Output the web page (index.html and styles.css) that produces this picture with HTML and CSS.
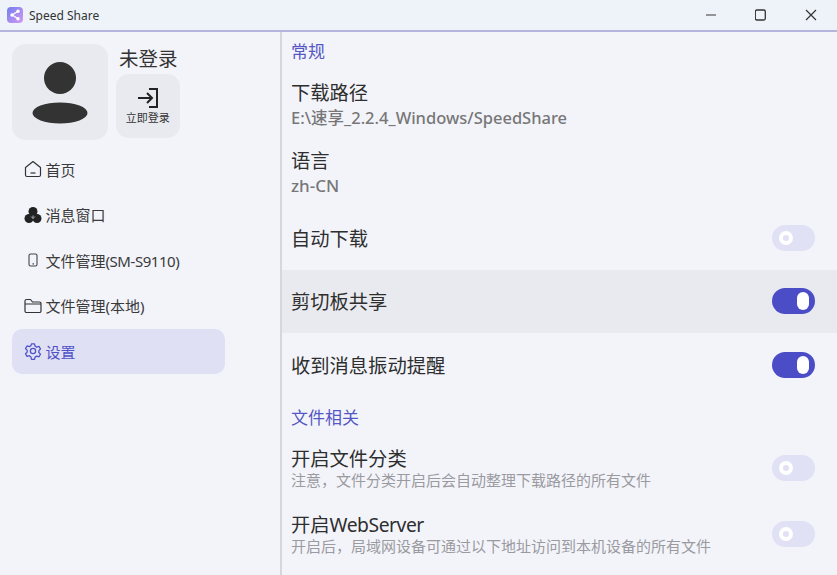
FILE: index.html
```html
<!DOCTYPE html>
<html lang="zh-CN">
<head>
<meta charset="utf-8">
<title>Speed Share</title>
<link rel="stylesheet" href="styles.css">
</head>
<body>
<div class="window">
  <header class="titlebar">
    <div class="app-title">
      <svg class="app-logo" viewBox="0 0 16 16"><defs><linearGradient id="lg" x1="0" y1="0" x2="1" y2="1"><stop offset="0" stop-color="#6f7df0"/><stop offset="1" stop-color="#d79af0"/></linearGradient></defs><rect width="16" height="16" rx="4" fill="url(#lg)"/><path d="M11 4.2 5.2 8l5.8 3.8" fill="none" stroke="#fff" stroke-width="1.3"/><circle cx="11" cy="4.2" r="1.7" fill="#fff"/><circle cx="5" cy="8" r="1.7" fill="#fff"/><circle cx="11" cy="11.8" r="1.7" fill="#fff"/></svg>
      <span>Speed Share</span>
    </div>
    <div class="win-controls">
      <button class="win-btn"><svg viewBox="0 0 12 12" width="12" height="12"><path d="M1 6h10" stroke="#555" stroke-width="1.2"/></svg></button>
      <button class="win-btn"><svg viewBox="0 0 12 12" width="12" height="12"><rect x=".3" y="1" width="10" height="10" rx="1.500" fill="none" stroke="#333" stroke-width="1.300"/></svg></button>
      <button class="win-btn"><svg viewBox="0 0 12 12" width="12" height="12"><path d="M1 1l10 10M11 1 1 11" stroke="#333" stroke-width="1.2"/></svg></button>
    </div>
  </header>
  <div class="main">
    <aside class="sidebar">
      <div class="profile">
        <div class="avatar">
          <svg viewBox="0 0 56 80" width="56" height="80"><circle cx="28" cy="26" r="16" fill="#333"/><ellipse cx="28" cy="61" rx="27.500" ry="10.500" fill="#333"/></svg>
        </div>
        <div class="profile-side">
          <div class="login-state">未登录</div>
          <button class="login-btn">
            <svg viewBox="0 0 24 24" width="24" height="24"><path d="M2 12h14M11 7l5 5-5 5" fill="none" stroke="#222" stroke-width="2"/><path d="M13 3h8v18h-8" fill="none" stroke="#222" stroke-width="2"/></svg>
            <span>立即登录</span>
          </button>
        </div>
      </div>
      <nav class="nav">
        <a class="nav-item">
          <svg viewBox="0 0 18 18" width="18" height="18"><path d="M1.500 7.500 9 1.500l7.500 6v7.500a1.500 1.500 0 0 1-1.500 1.500H3a1.500 1.500 0 0 1-1.500-1.500z" fill="none" stroke="#333" stroke-width="1.200" stroke-linejoin="round"/><path d="M6.500 13h5" stroke="#333" stroke-width="1.200"/></svg>
          <span>首页</span>
        </a>
        <a class="nav-item">
          <svg viewBox="0 0 18 18" width="18" height="18"><circle cx="9" cy="5.500" r="4.500" fill="#222"/><circle cx="5" cy="12.500" r="4.500" fill="#222"/><circle cx="13" cy="12.500" r="4.500" fill="#222"/><path d="M9 9.500v3M9 12.500l-2-2M9 12.500l2-2" stroke="#f3f4fa" stroke-width=".6"/></svg>
          <span>消息窗口</span>
        </a>
        <a class="nav-item">
          <svg viewBox="0 0 18 18" width="18" height="18"><rect x="5" y="3" width="8" height="12" rx="1.500" fill="none" stroke="#444" stroke-width="1.100"/><path d="M8.500 12.800h1.500" stroke="#444" stroke-width="1.200"/></svg>
          <span>文件管理<span class="tight">(SM-S9110)</span></span>
        </a>
        <a class="nav-item">
          <svg viewBox="0 0 18 18" width="18" height="18"><path d="M1 4a1.500 1.500 0 0 1 1.500-1.500h4L8.500 5H15.500A1.500 1.500 0 0 1 17 6.500V14a1.500 1.500 0 0 1-1.500 1.500h-13A1.500 1.500 0 0 1 1 14z" fill="none" stroke="#333" stroke-width="1.200" stroke-linejoin="round"/><path d="M1 7h16" stroke="#333" stroke-width="1"/></svg>
          <span>文件管理(本地)</span>
        </a>
        <a class="nav-item active">
          <svg viewBox="0 0 24 24" width="18" height="18" fill="none" stroke="#4f52c8" stroke-width="1.700" stroke-linejoin="round"><circle cx="12" cy="12" r="3.500"/><path d="M10 2.500h4l.7 3 2.300 1.300 3-.9 2 3.500-2.200 2.100v2.600l2.200 2.100-2 3.500-3-.9-2.300 1.300-.7 3h-4l-.7-3L7 18.200l-3 .9-2-3.500 2.200-2.100v-2.600L2 8.800l2-3.500 3 .9 2.300-1.300z"/></svg>
          <span>设置</span>
        </a>
      </nav>
    </aside>
    <section class="content">
      <h2 class="section-title">常规</h2>
      <div class="row row-info row-path">
        <div class="row-label">下载路径</div>
        <div class="row-value">E:\速享_2.2.4_Windows/SpeedShare</div>
      </div>
      <div class="row row-info row-lang">
        <div class="row-label">语言</div>
        <div class="row-value">zh-CN</div>
      </div>
      <div class="row row-switch">
        <div class="row-label">自动下载</div>
        <span class="switch"><span class="knob"></span></span>
      </div>
      <div class="row row-switch hovered">
        <div class="row-label">剪切板共享</div>
        <span class="switch on"><span class="knob"></span></span>
      </div>
      <div class="row row-switch">
        <div class="row-label">收到消息振动提醒</div>
        <span class="switch on"><span class="knob"></span></span>
      </div>
      <h2 class="section-title second">文件相关</h2>
      <div class="row row-desc">
        <div class="row-text">
          <div class="row-label">开启文件分类</div>
          <div class="row-note">注意，文件分类开启后会自动整理下载路径的所有文件</div>
        </div>
        <span class="switch"><span class="knob"></span></span>
      </div>
      <div class="row row-desc">
        <div class="row-text">
          <div class="row-label">开启<span class="tight">WebServer</span></div>
          <div class="row-note">开启后，局域网设备可通过以下地址访问到本机设备的所有文件</div>
        </div>
        <span class="switch"><span class="knob"></span></span>
      </div>
    </section>
  </div>
</div>
</body>
</html>
```
FILE: styles.css
```css
* { box-sizing: border-box; }
html, body { margin: 0; height: 100%; overflow: hidden; }
body {
  font-family: "Noto Sans", "Noto Sans CJK SC", sans-serif;
  background: #f3f4fa;
  color: #333;
}
.window { width: 837px; height: 575px; display: flex; flex-direction: column; }
.titlebar {
  height: 32px;
  flex: none;
  background: #eef3f9;
  border-bottom: 2px solid #b4b4dc;
  display: flex;
  align-items: center;
  justify-content: space-between;
}
.app-title { display: flex; align-items: center; gap: 6px; padding-left: 7px; font-size: 12px; color: #333; }
.app-logo { width: 16px; height: 16px; }
.win-controls { display: flex; padding-right: 1px; }
.win-btn {
  width: 50px; height: 30px; border: 0; background: none; padding: 0;
  display: flex; align-items: center; justify-content: center;
}
.main { flex: 1; display: flex; min-height: 0; }
.sidebar {
  width: 281.500px;
  flex: none;
  border-right: 2px solid #d6d6dc;
  padding: 12px 0 0 11.500px;
}
.profile { display: flex; gap: 8px; }
.avatar {
  width: 96px; height: 96px;
  border-radius: 14px;
  background: #e9eaf0;
  display: flex; align-items: center; justify-content: center;
}
.profile-side { display: flex; flex-direction: column; padding-top: 2px; }
.login-state { font-size: 19.500px; line-height: 26px; color: #333; width: 64px; padding-left: 3.500px; }
.login-btn {
  margin-top: 2px;
  width: 64.500px; height: 64px;
  border: 0; border-radius: 13px;
  background: #e9eaf0;
  display: flex; flex-direction: column; align-items: center; justify-content: center;
  padding: 0 0 1px;
  font-family: inherit;
  color: #333;
}
.login-btn span { font-size: 11px; line-height: 15px; }
.nav { margin-top: 7px; width: 213.500px; display: flex; flex-direction: column; gap: 1px; }
.nav-item {
  height: 44.500px;
  border-radius: 10px;
  display: flex; align-items: center; gap: 4px;
  padding-left: 12px;
  font-size: 15px;
  color: #3a3a3a;
}
.tight { letter-spacing: -0.45px; }
.nav-item.active { background: #dfe0f4; color: #4f52c8; }
.content { flex: 1; min-width: 0; overflow: hidden; padding-top: 7px; }
.section-title { margin: 0; padding-left: 9.500px; font-size: 17px; line-height: 26px; font-weight: 400; color: #5558c4; }
.section-title.second { margin: 8px 0 4px; }
.row { padding: 0 22px 0 9.500px; }
.row-label { font-size: 19.300px; line-height: 26px; color: #2e2e2e; }
.row-info.row-path { padding-top: 15px; }
.row-info.row-lang { padding-top: 18px; }
.row-value { font-size: 16.500px; line-height: 24px; color: #777; font-weight: 500; }
.row-lang .row-value { font-size: 17px; }
.row-switch { height: 63.500px; display: flex; align-items: center; justify-content: space-between; }
.row-switch .row-label { padding-top: 2px; }
.row-lang + .row-switch { margin-top: 8px; }
.hovered { background: #e9eaef; }
.row-desc { display: flex; align-items: center; justify-content: space-between; height: 66.500px; }
.row-note { font-size: 15px; line-height: 20px; color: #9a9a9f; margin-top: -2px; }
.switch {
  width: 43px; height: 26px;
  border-radius: 13px;
  background: #e0e1f4;
  display: flex; align-items: center;
  padding-left: 7px;
  flex: none;
}
.knob { width: 14px; height: 14px; border-radius: 50%; border: 4px solid #fff; background: #e0e1f4; }
.switch.on { background: #4a4dc6; justify-content: flex-end; padding: 0 6px 0 0; }
.switch.on .knob { width: 12px; height: 18px; border: 0; border-radius: 6px; background: #fff; }
```
